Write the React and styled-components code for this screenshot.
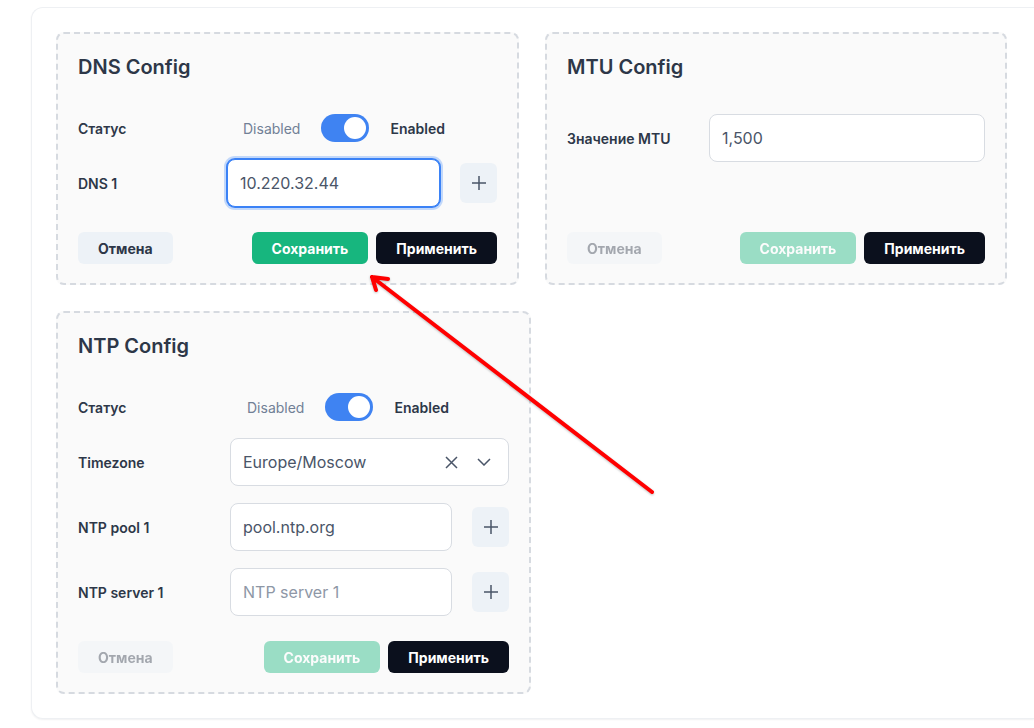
import React from "react";
import styled, { createGlobalStyle, css } from "styled-components";

const GlobalStyle = createGlobalStyle`
  html, body {
    margin: 0;
    padding: 0;
    background: #fff;
    overflow: hidden;
  }
  body {
    font-family: Inter, "Noto Sans", "Liberation Sans", sans-serif;
    color: #2d3748;
  }
  * {
    box-sizing: border-box;
  }
`;

const Page = styled.div`
  position: relative;
  width: 1034px;
  height: 728px;
  padding: 7px 0 0 31px;
`;

// the panel runs on past the right edge of the window, so no right border
const Panel = styled.section`
  width: 100%;
  padding: 24px;
  background: #fff;
  border: 1px solid #eef0f3;
  border-right: none;
  border-radius: 12px 0 0 12px;
  box-shadow: 0 1px 2px rgba(15, 23, 42, 0.06);
`;

const Board = styled.div`
  display: flex;
  flex-wrap: wrap;
  align-items: stretch;
  gap: 26px;
  width: 960px;
`;

const Card = styled.div`
  width: ${(p) => p.$width}px;
  display: flex;
  flex-direction: column;
  padding: 20px 20px 19px;
  background: #fafafa;
  border: 2px dashed #d6dae0;
  border-radius: 8px;
`;

const Title = styled.h3`
  margin: 0 0 34px;
  font-size: 20px;
  line-height: 26px;
  font-weight: 600;
  color: #2d3748;
`;

const Fields = styled.div`
  display: flex;
  flex-direction: column;
  gap: 17px;
`;

const Row = styled.div`
  display: grid;
  grid-template-columns: ${(p) => p.$label}px minmax(0, 1fr);
  align-items: center;
`;

const Label = styled.span`
  font-size: 14px;
  font-weight: 600;
  color: #2d3748;
`;

const SwitchGroup = styled.div`
  display: flex;
  align-items: center;
  gap: 21px;
  padding-left: ${(p) => p.$indent}px;
  font-size: 14px;
`;

const SwitchText = styled.span`
  color: ${(p) => (p.$active ? "#2d3748" : "#718096")};
  font-weight: ${(p) => (p.$active ? 600 : 400)};
`;

const Toggle = styled.span`
  position: relative;
  display: inline-block;
  width: 48px;
  height: 28px;
  border-radius: 14px;
  background: #3f83f2;

  &::after {
    content: "";
    position: absolute;
    top: 3px;
    right: 3px;
    width: 22px;
    height: 22px;
    border-radius: 50%;
    background: #fff;
  }
`;

const InputLine = styled.div`
  display: flex;
  align-items: center;
  gap: 20px;
`;

const fieldBox = css`
  height: 48px;
  width: 100%;
  min-width: 0;
  padding: 0 12px;
  background: #fff;
  border: 1px solid #d8dce2;
  border-radius: 8px;
  font-family: inherit;
  font-size: 16px;
  color: #4a5568;
`;

const TextInput = styled.input`
  ${fieldBox};
  flex: 1;
  outline: none;

  &::placeholder {
    color: #8e97a6;
  }

  ${(p) =>
    p.$focused &&
    css`
      border-color: #3b82f6;
      box-shadow: 0 0 0 1px #3b82f6, 0 0 0 3px rgba(147, 187, 250, 0.55);
    `}
`;

const SelectBox = styled.div`
  ${fieldBox};
  display: flex;
  align-items: center;
  padding-right: 17px;
`;

const SelectValue = styled.span`
  flex: 1;
`;

const SelectIcons = styled.span`
  display: flex;
  align-items: center;
  gap: 19px;
  color: #4a5568;
`;

const IconButton = styled.button`
  flex: none;
  width: 37px;
  height: 40px;
  display: flex;
  align-items: center;
  justify-content: center;
  padding: 0;
  border: none;
  border-radius: 6px;
  background: #edf2f7;
  color: #4a5568;
`;

const Actions = styled.div`
  display: flex;
  align-items: center;
  gap: 8px;
  margin-top: auto;
  padding-top: 25px;
`;

const Spacer = styled.span`
  flex: 1;
`;

const Button = styled.button`
  height: 32px;
  padding: 0 20px;
  border: none;
  border-radius: 6px;
  font-family: inherit;
  font-size: 14px;
  font-weight: 700;
  background: ${(p) =>
    p.$kind === "save" ? "#17b67e" : p.$kind === "apply" ? "#0b101d" : "#edf2f7"};
  color: ${(p) => (p.$kind === "cancel" ? "#2d3748" : "#fff")};
  opacity: ${(p) => (p.disabled ? 0.42 : 1)};
`;

const Overlay = styled.svg`
  position: absolute;
  left: 0;
  top: 0;
  width: 1034px;
  height: 728px;
  pointer-events: none;
  filter: drop-shadow(0 1px 1px rgba(0, 0, 0, 0.25));
`;

const PlusIcon = () => (
  <svg width="16" height="16" viewBox="0 0 16 16" fill="none">
    <path d="M8 1v14M1 8h14" stroke="currentColor" strokeWidth="1.5" />
  </svg>
);

const CloseIcon = () => (
  <svg width="13" height="13" viewBox="0 0 13 13" fill="none">
    <path d="M1 1l11 11M12 1L1 12" stroke="currentColor" strokeWidth="1.5" />
  </svg>
);

const ChevronIcon = () => (
  <svg width="14" height="8" viewBox="0 0 14 8" fill="none">
    <path d="M1 1l6 6 6-6" stroke="currentColor" strokeWidth="1.5" />
  </svg>
);

const StatusRow = ({ label, indent }) => (
  <Row $label={label}>
    <Label>Статус</Label>
    <SwitchGroup $indent={indent}>
      <SwitchText>Disabled</SwitchText>
      <Toggle />
      <SwitchText $active>Enabled</SwitchText>
    </SwitchGroup>
  </Row>
);

const ActionBar = ({ dirty }) => (
  <Actions>
    <Button $kind="cancel" disabled={!dirty}>
      Отмена
    </Button>
    <Spacer />
    <Button $kind="save" disabled={!dirty}>
      Сохранить
    </Button>
    <Button $kind="apply">Применить</Button>
  </Actions>
);

export default function App() {
  return (
    <Page>
      <GlobalStyle />
      <Panel>
        <Board>
          <Card $width={463}>
            <Title>DNS Config</Title>
            <Fields>
              <StatusRow label={149} indent={16} />
              <Row $label={149}>
                <Label>DNS 1</Label>
                <InputLine>
                  <TextInput $focused defaultValue="10.220.32.44" />
                  <IconButton>
                    <PlusIcon />
                  </IconButton>
                </InputLine>
              </Row>
            </Fields>
            <ActionBar dirty />
          </Card>

          <Card $width={462}>
            <Title>MTU Config</Title>
            <Fields>
              <Row $label={142}>
                <Label>Значение MTU</Label>
                <TextInput defaultValue="1,500" />
              </Row>
            </Fields>
            <ActionBar />
          </Card>

          <Card $width={475}>
            <Title>NTP Config</Title>
            <Fields>
              <StatusRow label={152} indent={17} />
              <Row $label={152}>
                <Label>Timezone</Label>
                <SelectBox>
                  <SelectValue>Europe/Moscow</SelectValue>
                  <SelectIcons>
                    <CloseIcon />
                    <ChevronIcon />
                  </SelectIcons>
                </SelectBox>
              </Row>
              <Row $label={152}>
                <Label>NTP pool 1</Label>
                <InputLine>
                  <TextInput defaultValue="pool.ntp.org" />
                  <IconButton>
                    <PlusIcon />
                  </IconButton>
                </InputLine>
              </Row>
              <Row $label={152}>
                <Label>NTP server 1</Label>
                <InputLine>
                  <TextInput placeholder="NTP server 1" />
                  <IconButton>
                    <PlusIcon />
                  </IconButton>
                </InputLine>
              </Row>
            </Fields>
            <ActionBar />
          </Card>
        </Board>
      </Panel>

      <Overlay viewBox="0 0 1034 728">
        <path
          d="M652 492L372 277M372 277L388 279M372 277L376 290"
          stroke="#ff0000"
          strokeWidth="4"
          strokeLinecap="round"
          strokeLinejoin="round"
          fill="none"
        />
      </Overlay>
    </Page>
  );
}
